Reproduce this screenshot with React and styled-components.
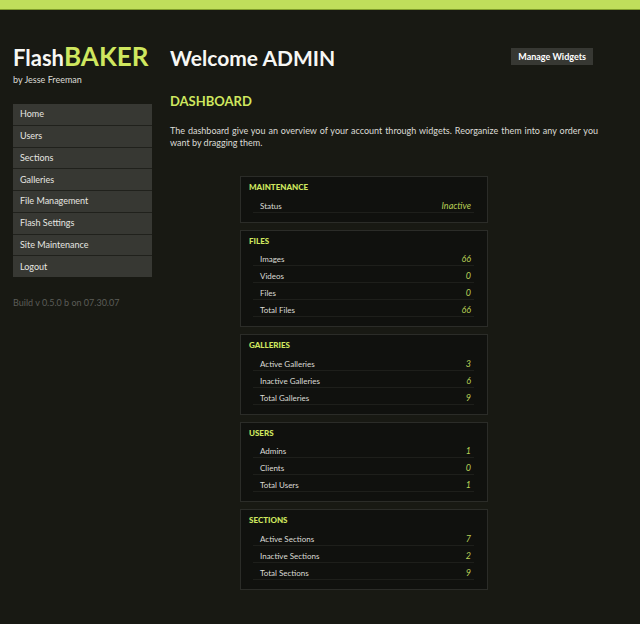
import React from "react";
import styled, { createGlobalStyle } from "styled-components";

const lime = "#cfe75f";

const GlobalStyle = createGlobalStyle`
  * { box-sizing: border-box; }
  body {
    margin: 0;
    background: #181913;
    color: #dcdcd6;
    font-family: Lato, "Open Sans", sans-serif;
    font-size: 8px;
    line-height: 12px;
  }
`;

const Page = styled.div`
  min-height: 100vh;
  border-top: 9px solid #c0de5b;
  box-shadow: inset 0 1px 0 #809c2b;
`;

const Columns = styled.div`
  display: flex;
  gap: 18px;
  padding: 29px 42px 35px 13px;
`;

const Sidebar = styled.aside`
  flex: 0 0 139px;
`;

const Logo = styled.div`
  color: #f7f7f4;
  font-size: 22px;
  font-weight: 700;
  line-height: 36px;
  white-space: nowrap;
`;

const LogoAccent = styled.span`
  color: ${lime};
  font-size: 26px;
`;

const Byline = styled.p`
  margin: 0 0 20px;
  font-size: 9px;
  line-height: 8px;
`;

const Nav = styled.nav`
  display: grid;
  grid-auto-rows: 1fr;
  gap: 1px;
  min-height: 173px;
  background: #20211c;
`;

const NavLink = styled.a`
  display: flex;
  align-items: center;
  padding: 0 7px;
  background: #373833;
  color: #e6e6e1;
  font-size: 9px;
  text-decoration: none;
`;

const Build = styled.p`
  margin: 20px 0 0;
  color: #5c5d58;
  font-size: 9px;
`;

const Main = styled.main`
  flex: 1;
  min-width: 0;
`;

const Header = styled.header`
  display: flex;
  align-items: center;
  justify-content: space-between;
  padding-right: 5px;
`;

const Title = styled.h1`
  margin: 0;
  color: #f7f7f4;
  font-size: 21px;
  line-height: 40px;
`;

const ManageButton = styled.button`
  height: 17px;
  margin-bottom: 4px;
  padding: 0 7px;
  border: 0;
  background: #373833;
  color: #ffffff;
  font: 700 9px/17px Lato, sans-serif;
`;

const Heading = styled.h2`
  margin: 13px 0 14px;
  color: ${lime};
  font-size: 13px;
  line-height: 20px;
`;

const Intro = styled.p`
  margin: 0;
  font-size: 9px;
  text-align: justify;
`;

const Board = styled.div`
  display: flex;
  flex-direction: column;
  gap: 7px;
  max-width: 248px;
  margin: 27px 0 0 70px;
`;

const Card = styled.section`
  padding: 4px 13px 9px 8px;
  border: 1px solid #2b2c28;
  background: #10110e;
`;

const CardTitle = styled.h3`
  margin: 0;
  color: ${lime};
  font-size: 8px;
  font-weight: 900;
  line-height: 13px;
  padding-bottom: 1px;
`;

const StatTable = styled.table`
  width: calc(100% - 4px);
  margin-left: 4px;
  border-collapse: collapse;
`;

const StatRow = styled.tr`
  height: 17px;
  border-bottom: 1px solid #1e1f1b;
`;

const StatName = styled.th`
  padding: 0 7px;
  font-weight: 400;
  text-align: left;
  vertical-align: bottom;
`;

const StatValue = styled.td`
  padding: 0 3px;
  color: #b9d056;
  font-size: 9px;
  font-style: italic;
  text-align: right;
  vertical-align: bottom;
`;

const links = ["Home", "Users", "Sections", "Galleries", "File Management", "Flash Settings", "Site Maintenance", "Logout"];

const widgets = [
  { title: "MAINTENANCE", stats: [["Status", "Inactive"]] },
  { title: "FILES", stats: [["Images", "66"], ["Videos", "0"], ["Files", "0"], ["Total Files", "66"]] },
  { title: "GALLERIES", stats: [["Active Galleries", "3"], ["Inactive Galleries", "6"], ["Total Galleries", "9"]] },
  { title: "USERS", stats: [["Admins", "1"], ["Clients", "0"], ["Total Users", "1"]] },
  { title: "SECTIONS", stats: [["Active Sections", "7"], ["Inactive Sections", "2"], ["Total Sections", "9"]] },
];

function Widget({ title, stats }) {
  return (
    <Card>
      <CardTitle>{title}</CardTitle>
      <StatTable aria-label={title}>
        <tbody>
          {stats.map(([name, value]) => (
            <StatRow key={name}>
              <StatName scope="row">{name}</StatName>
              <StatValue>{value}</StatValue>
            </StatRow>
          ))}
        </tbody>
      </StatTable>
    </Card>
  );
}

export default function App() {
  return (
    <>
      <GlobalStyle />
      <Page>
        <Columns>
          <Sidebar>
            <Logo>Flash<LogoAccent>BAKER</LogoAccent></Logo>
            <Byline>by Jesse Freeman</Byline>
            <Nav aria-label="Main">
              {links.map((label) => (
                <NavLink key={label} href="#">{label}</NavLink>
              ))}
            </Nav>
            <Build>Build v 0.5.0 b on 07.30.07</Build>
          </Sidebar>
          <Main>
            <Header>
              <Title>Welcome ADMIN</Title>
              <ManageButton type="button">Manage Widgets</ManageButton>
            </Header>
            <Heading>DASHBOARD</Heading>
            <Intro>
              The dashboard give you an overview of your account through widgets. Reorganize them into any order you want by dragging them.
            </Intro>
            <Board>
              {widgets.map((widget) => (
                <Widget key={widget.title} {...widget} />
              ))}
            </Board>
          </Main>
        </Columns>
      </Page>
    </>
  );
}
